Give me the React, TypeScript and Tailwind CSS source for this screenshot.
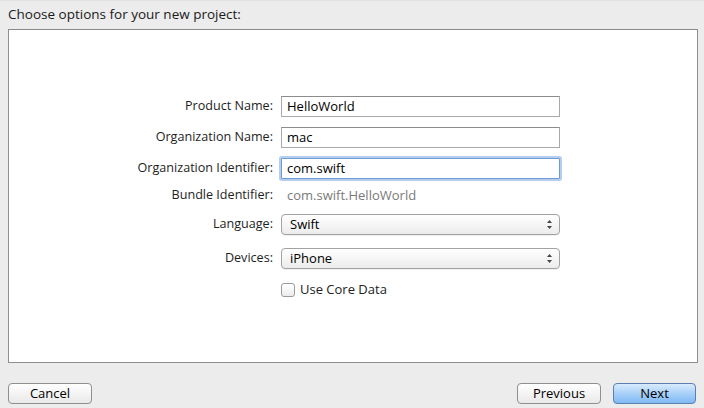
import React from 'react';

const font = { fontFamily: '"Open Sans", "Liberation Sans", Arial, sans-serif' };

const Stepper: React.FC = () => (
  <svg width="7" height="11" viewBox="0 0 7 11" className="shrink-0">
    <path d="M3.5 1 L6 4 H1 Z" fill="#444" />
    <path d="M3.5 10 L6 7 H1 Z" fill="#444" />
  </svg>
);

const Label: React.FC<{ children: React.ReactNode }> = ({ children }) => (
  <div className="w-[264px] shrink-0 text-right text-[12.6px] text-[#1e1e1e]">{children}</div>
);

const TextField: React.FC<{ value: string; focused?: boolean }> = ({ value, focused }) => (
  <div
    className={
      focused
        ? 'ml-[8px] w-[279px] h-[21px] flex items-center px-[5px] bg-white border border-[#6f9ad2] shadow-[0_0_0_2px_rgba(120,165,225,0.55)] rounded-[1px] text-[13px] text-black'
        : 'ml-[8px] w-[279px] h-[21px] flex items-center px-[5px] bg-white border border-[#a9a9a9] border-t-[#8c8c8c] text-[13px] text-black'
    }
  >
    {value}
  </div>
);

const Select: React.FC<{ value: string }> = ({ value }) => (
  <div className="ml-[8px] w-[279px] h-[21px] flex items-center justify-between pl-[8px] pr-[6px] rounded-[4px] border border-[#a2a2a2] bg-gradient-to-b from-white to-[#ececec] shadow-[0_1px_0_rgba(0,0,0,0.06)] text-[13px] text-black">
    <span>{value}</span>
    <Stepper />
  </div>
);

const Button: React.FC<{ children: React.ReactNode; primary?: boolean }> = ({ children, primary }) => (
  <div
    className={
      primary
        ? 'w-[83px] h-[21px] flex items-center justify-center rounded-[4px] border border-[#5b7fae] bg-gradient-to-b from-[#d9ecfd] via-[#a8d0f8] to-[#7fbaf5] text-[13px] text-black'
        : 'w-[84px] h-[21px] flex items-center justify-center rounded-[4px] border border-[#8f8f8f] bg-gradient-to-b from-white to-[#e9e9e9] text-[13px] text-black'
    }
  >
    {children}
  </div>
);

export default function App() {
  return (
    <div className="w-[704px] h-[408px] bg-[#ececec] flex flex-col overflow-hidden" style={font}>
      <div className="h-[29px] shrink-0 pl-[8px] pt-[3px] text-[13.5px] text-[#1a1a1a] border-t border-[#e2e2e2]">
        Choose options for your new project:
      </div>

      <div className="ml-[8px] w-[690px] h-[334px] shrink-0 bg-white border border-[#8e8e8e] border-t-[#8a8a8a] flex flex-col pt-[66px]">
        <div className="flex items-center">
          <Label>Product Name:</Label>
          <TextField value="HelloWorld" />
        </div>
        <div className="flex items-center mt-[10px]">
          <Label>Organization Name:</Label>
          <TextField value="mac" />
        </div>
        <div className="flex items-center mt-[10px]">
          <Label>Organization Identifier:</Label>
          <TextField value="com.swift" focused />
        </div>
        <div className="flex items-center mt-[9px] h-[15px]">
          <Label>Bundle Identifier:</Label>
          <div className="ml-[8px] pl-[6px] text-[13px] text-[#7a7a7a]">com.swift.HelloWorld</div>
        </div>
        <div className="flex items-center mt-[11px]">
          <Label>Language:</Label>
          <Select value="Swift" />
        </div>
        <div className="flex items-center mt-[13px]">
          <Label>Devices:</Label>
          <Select value="iPhone" />
        </div>
        <div className="flex items-center mt-[11px] pl-[272px]">
          <div className="w-[14px] h-[14px] rounded-[3px] border border-[#9a9a9a] bg-gradient-to-b from-white to-[#ededed]" />
          <span className="ml-[5px] text-[13px] text-[#222]">Use Core Data</span>
        </div>
      </div>

      <div className="flex items-start pt-[20px] px-[8px]">
        <Button>Cancel</Button>
        <div className="flex-1" />
        <Button>Previous</Button>
        <div className="w-[12px]" />
        <Button primary>Next</Button>
      </div>
    </div>
  );
}
